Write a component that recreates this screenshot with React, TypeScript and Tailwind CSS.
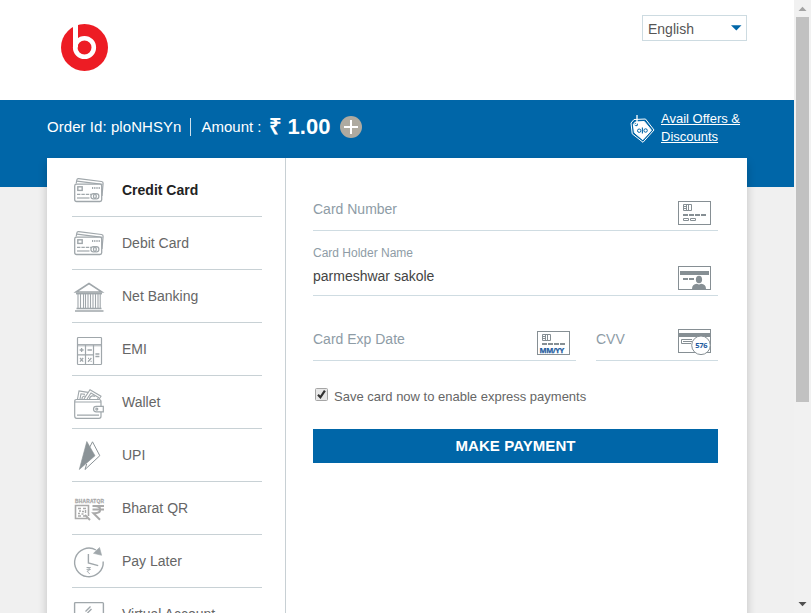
import type { ReactNode } from "react";

const G = "#a0a7ab";

function Svg({ children }: { children: ReactNode }) {
  return (
    <svg width="32" height="32" viewBox="0 0 32 32" fill="none" stroke={G} strokeWidth="1.2" className="shrink-0 overflow-visible">
      {children}
    </svg>
  );
}

function CardsIcon() {
  return (
    <Svg>
      <path d="M3.2 9.5 3.8 6Q4.1 4.4 5.6 4.6L28.5 7.5Q30.3 7.8 30.1 9.5L29 22" />
      <path d="M4 7.2 29.5 10.3" />
      <rect x="1.7" y="10.2" width="27" height="17.3" rx="1.8" fill="#fff" strokeWidth="1.3" />
      <rect x="4.8" y="12.8" width="4.4" height="3.6" strokeWidth="1.4" />
      <path d="M19 14h8" strokeWidth="2" strokeDasharray="1.2 1" />
      <path d="M4 20.4h14" strokeDasharray="3.4 1" />
      <path d="M4 24h12.5" />
      <circle cx="20.6" cy="22.3" r="2.7" />
      <circle cx="23.2" cy="22.3" r="2.7" />
    </Svg>
  );
}

function BankIcon() {
  return (
    <Svg>
      <path d="M3 12 16 3.5 29 12Z" strokeWidth="1.5" />
      <path d="M3 13.5h26" strokeWidth="1.8" />
      <path d="M5 14v14M7.5 14v14M10.5 14v14M12.5 14v14M15 14v14M17.5 14v14M20 14v14M22.5 14v14M25 14v14M27.2 14v14" strokeWidth="1.1" />
      <path d="M3.5 28.5h25M2 31h28.5" strokeWidth="1.6" />
    </Svg>
  );
}

function CalcIcon() {
  return (
    <Svg>
      <rect x="4.5" y="4.5" width="24" height="27" rx="0.8" />
      <path d="M4.5 11.5h24M4.5 12.8h24" strokeWidth="0.9" />
      <path d="M12.5 12v19.5M20.5 12v19.5M4.5 21.8h16" />
      <path d="M6.6 17h4M8.6 15v4M14.5 17h4.4M22.4 21h4M22.4 23.5h4M7 25l3.2 3.6M10.2 25 7 28.6M18.4 25l-3.4 3.8M15 25.4h1M17.6 28.4h1" strokeWidth="1.3" />
    </Svg>
  );
}

function WalletIcon() {
  return (
    <Svg>
      <path d="M4.5 13 6 5l9 1.4M7 13l1-5.2 4 .6M11 13l6-9.3 11 6.5-1.8 2.8M14 13l4-6 7.5 4.5-1 1.5" strokeWidth="1.1" />
      <path d="M16.5 13a3.4 3.4 0 0 1 5.4-2.5M9 13q0-3 3.3-3" />
      <path d="M28 20V15.5q0-2-2-2H3.5q-1.8 0-1.8 2V30q0 2.3 2 2.3H26q2 0 2-2V26M1.7 16h26M4 29.2h22" />
      <path d="M30.3 20.3h-7a2.8 2.8 0 0 0 0 5.6h7Z" fill="#fff" />
      <circle cx="23.8" cy="23.1" r="1" />
    </Svg>
  );
}

function UpiIcon() {
  return (
    <Svg>
      <path d="M13.8 2.5 22 16.7 6.3 30.5Z" fill="#8b9397" stroke="#8b9397" strokeWidth="0.6" />
      <path d="M16.8 8 19.5 2.8 26.8 16.7 12 30.5 13.7 25" stroke="#8b9397" strokeWidth="1" />
    </Svg>
  );
}

function BharatQrIcon() {
  return (
    <Svg>
      <text x="2" y="10.6" textLength="29" fontSize="4.8" fontWeight="bold" fill="#aaa" stroke="#aaa" strokeWidth="0.3" fontFamily="Liberation Sans, sans-serif">BHARATQR</text>
      <path d="M14.5 26.5h-12v-13H15.5V24" stroke="#aaa" strokeWidth="1.6" />
      <path d="M5 16.5h3M10 16.5h3M6 19h2M9 19.5h2M12.5 18v3M5 21.5h2M8.5 22h2M5 24h3M10 24h2" stroke="#aaa" strokeWidth="1.4" />
      <path d="m12 23 5 5" stroke="#aaa" strokeWidth="2" />
      <path d="M19.5 14H31M19.5 17.5H31M22 14q5.2 0 5.2 3.6T22 21.3h-1.5l6.5 6.4" stroke="#aaa" strokeWidth="2" />
    </Svg>
  );
}

function LaterIcon() {
  return (
    <Svg>
      <path d="M30.2 16.5A14.3 14.3 0 1 1 23 5" strokeWidth="1.4" />
      <path d="M26.5 2.5 28.6 10.3 20.5 8.3Z" fill={G} strokeWidth="0.6" />
      <path d="M15.4 9v9l9.8 2.6" strokeWidth="1.4" />
      <path d="M13.5 22.5h4.3M13.5 24.4h4.3M14 22.5q2.6 0 2.6 1.8T14 26.2l2.8 2.8" strokeWidth="0.9" />
    </Svg>
  );
}

function AccountIcon() {
  return (
    <Svg>
      <path d="M1.6 30V5.5q0-.9.9-.9h27q.9 0 .9.9V30M12.5 13.5l5-5M14.5 15l4-4" strokeWidth="1.4" />
    </Svg>
  );
}

const methods: { label: string; icon: ReactNode }[] = [
  { label: "Credit Card", icon: <CardsIcon /> },
  { label: "Debit Card", icon: <CardsIcon /> },
  { label: "Net Banking", icon: <BankIcon /> },
  { label: "EMI", icon: <CalcIcon /> },
  { label: "Wallet", icon: <WalletIcon /> },
  { label: "UPI", icon: <UpiIcon /> },
  { label: "Bharat QR", icon: <BharatQrIcon /> },
  { label: "Pay Later", icon: <LaterIcon /> },
  { label: "Virtual Account", icon: <AccountIcon /> },
];

const D = "#868f94";

function FieldIcon({ children }: { children: ReactNode }) {
  return (
    <svg width="33" height="24" viewBox="0 0 33 24" fill="none" stroke={D} className="mt-[35px] shrink-0 overflow-visible">
      <rect x="0.5" y="0.5" width="32" height="23" fill="#fff" />
      {children}
    </svg>
  );
}

function Chip() {
  return <path d="M5.5 3.5h8v6h-8ZM8.5 3.5v6M10.5 3.5v6M5.5 5.5h3M5.5 7.5h3" />;
}

function NumberIcon() {
  return (
    <FieldIcon>
      <Chip />
      <path d="M5 14h23" strokeWidth="2" strokeDasharray="5 1" />
      <path d="M5.5 17.5h5v2h-5ZM12.5 17.5h5v2h-5Z" />
    </FieldIcon>
  );
}

function HolderIcon() {
  return (
    <FieldIcon>
      <path d="M2 7h29" strokeWidth="4" />
      <path d="M5 13h11" strokeWidth="2" strokeDasharray="5 1" />
      <ellipse cx="21" cy="13.5" rx="3.1" ry="3.8" fill={D} stroke="none" />
      <path d="M14 23q0-5 5-5.3 2 1.4 4 0 5 .3 5 5.3Z" fill={D} stroke="none" />
    </FieldIcon>
  );
}

function ExpiryIcon() {
  return (
    <FieldIcon>
      <Chip />
      <path d="M5 13h23" strokeWidth="2" strokeDasharray="5 1" />
      <text x="2.6" y="21.6" textLength="24.5" fontSize="7.5" fontWeight="bold" fill="#1d5a9e" stroke="#1d5a9e" strokeWidth="0.25" fontFamily="Open Sans, sans-serif">MM/YY</text>
    </FieldIcon>
  );
}

function CvvIcon() {
  return (
    <svg width="33" height="26" viewBox="0 0 33 26" fill="none" stroke={D} className="mt-[33px] shrink-0 overflow-visible">
      <rect x="0.5" y="0.5" width="32" height="23" />
      <path d="M0 6h33" strokeWidth="4" />
      <path d="M14 10.5H3.5v4H13M5 12.5h9" />
      <circle cx="23" cy="16.3" r="9.3" fill="#fff" />
      <text x="17.2" y="18.9" textLength="12.4" fontSize="7.5" fontWeight="bold" fill="#1d5a9e" stroke="none" fontFamily="Open Sans, sans-serif">576</text>
    </svg>
  );
}

const field = "flex h-[65px] items-start justify-between border-b border-[#cfdce2]";
const placeholder = "mt-[33px] text-sm leading-5 text-[#8e9ca6]";

export default function App() {
  return (
    <div className="flex h-[613px] w-[811px] overflow-hidden bg-[#f0f0f0] font-['Liberation_Sans',Arial,sans-serif]">
      <div className="h-full w-[794px] overflow-hidden">
        <header className="flex h-[100px] items-start justify-between bg-white pr-[47px] pl-[61px]">
          <svg width="48" height="48" viewBox="0 0 48 48" className="mt-[24px]">
            <circle cx="23.5" cy="23.5" r="23.5" fill="#ed1c24" />
            <path d="M14.5 0v23.5" stroke="#fff" strokeWidth="5" />
            <circle cx="23.5" cy="23.5" r="9.3" fill="none" stroke="#fff" strokeWidth="4.6" />
          </svg>
          <button className="mt-[15px] flex h-[26px] w-[105px] items-center justify-between border border-[#cddbe1] pr-1 pl-[5px] text-sm text-[#555]">
            <span className="pt-[2px]">English</span>
            <svg width="11" height="6" viewBox="0 0 11 6" fill="#0066a8">
              <path d="M0 .3h10.5L5.3 5.5Z" />
            </svg>
          </button>
        </header>

        <section className="h-[87px] bg-[#0066a8] pr-[54px] pl-[47px] text-white">
          <div className="flex h-[54px] items-center">
            <span className="text-[15px] tracking-[0.06px]">Order Id: ploNHSYn</span>
            <span className="ml-[9px] h-[18px] w-px bg-[#cfe0ec]" />
            <span className="ml-[10px] text-[15px]">Amount :</span>
            <span className="ml-[7px] pb-[2px] text-[22px] font-bold">₹ 1.00</span>
            <svg width="22" height="22" viewBox="0 0 22 22" className="ml-[10px]">
              <circle cx="11" cy="11" r="11" fill="#aeaaa0" />
              <path d="M4 11h14M11 4v14" stroke="#fff" strokeWidth="2" />
            </svg>
            <svg width="25" height="28" viewBox="0 0 25 28" className="mt-[3px] ml-auto">
              <path d="M1 8 4 4.5 15.5 4 24 15 13 27.3 2.2 18.8Z" fill="none" stroke="#fff" strokeWidth="1" strokeLinejoin="round" />
              <path d="M3.4 9.4 5.3 7 14.3 6.5 21.4 15.2 12.8 24.7 4.4 17.6Z" fill="#fff" stroke="#fff" strokeLinejoin="round" />
              <circle cx="6.2" cy="9.5" r="1.7" fill="#0066a8" />
              <path d="M7 0v7.5Q6.5 10.5 4.5 9" fill="none" stroke="#fff" strokeWidth="1.3" />
              <circle cx="9.2" cy="15.7" r="1.7" fill="none" stroke="#0066a8" strokeWidth="1" />
              <circle cx="15.6" cy="15.5" r="1.7" fill="none" stroke="#0066a8" strokeWidth="1" />
              <path d="M12.4 12.5v6" stroke="#0066a8" strokeWidth="1.1" />
            </svg>
            <a className="mt-[2px] ml-[6px] w-[79px] text-[13px] leading-[18px] whitespace-nowrap underline">
              Avail Offers &amp;
              <br />
              Discounts
            </a>
          </div>
        </section>

        <main className="relative -mt-[29px] ml-[47px] flex h-[500px] w-[700px] bg-white shadow-[0_5px_9px_rgba(0,0,0,0.2)]">
          <nav className="w-[239px] border-r border-[#c8d0d4] pt-[6px] pr-[23px] pl-[25px]">
            {methods.map((m, i) => (
              <div key={m.label} className="flex h-[53px] items-center gap-[17px] border-b border-[#c8d1d5] pl-px">
                {m.icon}
                <span className={i === 0 ? "text-sm font-bold text-[#222]" : "text-sm text-[#666]"}>{m.label}</span>
              </div>
            ))}
          </nav>

          <div className="w-[461px] pt-2 pr-[29px] pl-[27px]">
            <div className={`${field} pr-[7px]`}>
              <span className={placeholder}>Card Number</span>
              <NumberIcon />
            </div>
            <div className={`${field} pr-[7px]`}>
              <div>
                <div className="mt-[14px] text-xs leading-4 text-[#8e9ca6]">Card Holder Name</div>
                <div className="mt-[5px] text-sm leading-5 text-[#444]">parmeshwar sakole</div>
              </div>
              <HolderIcon />
            </div>
            <div className="flex gap-5">
              <div className={`${field} w-[263px] pr-[6px]`}>
                <span className={placeholder}>Card Exp Date</span>
                <ExpiryIcon />
              </div>
              <div className={`${field} w-[122px] pr-[7px]`}>
                <span className={placeholder}>CVV</span>
                <CvvIcon />
              </div>
            </div>

            <div className="mt-[27px] flex h-[18px] items-start pl-[2px]">
              <svg width="13" height="13" viewBox="0 0 13 13">
                <rect x="0.5" y="0.5" width="12" height="12" rx="1" fill="#e8e8e8" stroke="#a5a5a5" />
                <path d="m3 6.8 2.4 2.5 4.5-6.6" fill="none" stroke="#333" strokeWidth="2.2" />
              </svg>
              <span className="mt-px ml-[6px] text-[13px] leading-4 text-[#666]">Save card now to enable express payments</span>
            </div>
            <button className="mt-[23px] h-[34px] w-full bg-[#0066a8] pt-px text-[15px] font-bold tracking-[0.08px] text-white">MAKE PAYMENT</button>
          </div>
        </main>
      </div>

      <div className="flex h-full w-[17px] flex-col items-center justify-between bg-[#f1f1f1]">
        <svg width="17" height="17" viewBox="0 0 17 17" fill="#a3a3a3">
          <path d="M4.5 11h8l-4-4.2Z" />
        </svg>
        <div className="h-[385px] w-[13px] bg-[#c1c1c1]" />
        <div className="flex-1" />
        <svg width="17" height="17" viewBox="0 0 17 17" fill="#505050">
          <path d="M4.5 6h8l-4 4.2Z" />
        </svg>
      </div>
    </div>
  );
}
